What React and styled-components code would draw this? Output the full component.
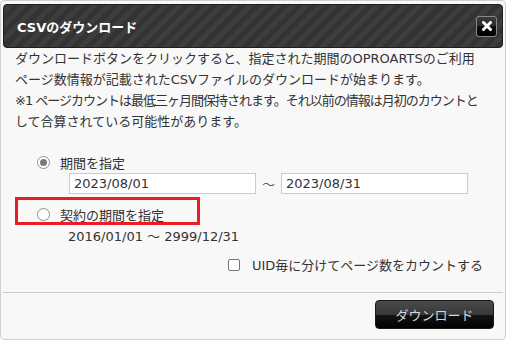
import React from 'react';
import styled, { createGlobalStyle } from 'styled-components';

const GlobalStyle = createGlobalStyle`
    body {
        margin: 0;
        background: #ffffff;
        font-family: "DejaVu Sans", "Noto Sans CJK JP", sans-serif;
    }
`;

const Dialog = styled.div`
    position: relative;
    box-sizing: border-box;
    width: 506px;
    height: 340px;
    border: 1px solid #cfcfcf;
    border-radius: 4px;
    padding: 3px 2px 0 2px;
    background: #f8f8f8;
    display: flex;
    flex-direction: column;
    color: #333333;
    font-size: 13px;
`;

const TitleBar = styled.div`
    box-sizing: border-box;
    height: 44px;
    border: 1px solid #1e1e1e;
    border-radius: 4px;
    background-color: #333333;
    background-image: repeating-linear-gradient(
        -45deg,
        #333333 0px,
        #333333 5px,
        #3d3d3d 5px,
        #3d3d3d 10px
    );
    display: flex;
    align-items: center;
    justify-content: space-between;
    padding: 0 5px 0 13px;
`;

const Title = styled.h1`
    margin: 0;
    font-size: 13px;
    font-weight: bold;
    color: #ffffff;
`;

const CloseButton = styled.button`
    box-sizing: border-box;
    width: 21px;
    height: 21px;
    padding: 0;
    border: 1px solid #8a8a8a;
    border-radius: 3px;
    background: linear-gradient(#3a3a3a 0%, #2a2a2a 50%, #0c0c0c 50%, #000000 100%);
    display: flex;
    align-items: center;
    justify-content: center;
`;

const Body = styled.div`
    flex: 1;
    display: flex;
    flex-direction: column;
    padding: 0 12px;
`;

const Description = styled.p`
    margin: 0;
    line-height: 21px;
    white-space: nowrap;
`;

const Tight = styled.span`
    letter-spacing: -1px;
`;

const Options = styled.div`
    display: flex;
    flex-direction: column;
    padding: 19px 0 0 22px;
`;

const RadioRow = styled.label`
    display: flex;
    align-items: center;
    gap: 10px;
    height: 22px;
`;

const Radio = styled.span`
    box-sizing: border-box;
    width: 13px;
    height: 13px;
    border-radius: 50%;
    border: 1px solid #8f8f8f;
    background: #ffffff;
    display: flex;
    align-items: center;
    justify-content: center;

    &::after {
        content: '';
        width: 7px;
        height: 7px;
        border-radius: 50%;
        background: ${p => (p.$checked ? '#7a7a7a' : 'transparent')};
    }
`;

const RangeRow = styled.div`
    display: flex;
    align-items: center;
    gap: 6px;
    padding: 0 0 0 32px;
    margin: 0 0 9px 0;
`;

const DateInput = styled.div`
    box-sizing: border-box;
    width: 187px;
    height: 21px;
    border: 1px solid #cccccc;
    background: #ffffff;
    padding: 0 4px;
    display: flex;
    align-items: center;
`;

const Tilde = styled.span`
    color: #555555;
`;

const Period = styled.div`
    padding: 2px 0 0 31px;
    line-height: 20px;
`;

const CheckRow = styled.label`
    display: flex;
    align-items: center;
    justify-content: flex-end;
    gap: 12px;
    padding: 8px 8px 0 0;
`;

const Checkbox = styled.span`
    box-sizing: border-box;
    width: 12px;
    height: 12px;
    border: 1px solid #777777;
    border-radius: 2px;
    background: #ffffff;
`;

const Footer = styled.div`
    box-sizing: border-box;
    height: 47px;
    border-top: 1px solid #cccccc;
    display: flex;
    justify-content: flex-end;
    padding: 7px 9px 0 0;
`;

const DownloadButton = styled.button`
    box-sizing: border-box;
    width: 119px;
    height: 29px;
    border: 1px solid #1a1a1a;
    border-radius: 4px;
    background: linear-gradient(#4a4a4a 0%, #383838 50%, #141414 52%, #000000 100%);
    color: #d6d6d6;
    font-family: "DejaVu Sans", "Noto Sans CJK JP", sans-serif;
    font-size: 13px;
`;

const Highlight = styled.div`
    position: absolute;
    left: 14px;
    top: 196px;
    width: 185px;
    height: 28px;
    box-sizing: border-box;
    border: 3px solid #e81d25;
`;

const App = () => {
    return (
        <>
            <GlobalStyle />
            <Dialog>
                <TitleBar>
                    <Title>CSVのダウンロード</Title>
                    <CloseButton>
                        <svg width="10" height="10" viewBox="0 0 10 10">
                            <path d="M1.5 1.5 L8.5 8.5 M8.5 1.5 L1.5 8.5" stroke="#ffffff" strokeWidth="2.8" strokeLinecap="square" />
                        </svg>
                    </CloseButton>
                </TitleBar>
                <Body>
                    <Description>
                        ダウンロードボタンをクリックすると、指定された期間のOPROARTSのご利用<br />
                        ページ数情報が記載されたCSVファイルのダウンロードが始まります。<br />
                        <Tight>※1 ページカウントは最低三ヶ月間保持されます。それ以前の情報は月初のカウントと</Tight><br />
                        して合算されている可能性があります。
                    </Description>
                    <Options>
                        <RadioRow>
                            <Radio $checked />
                            期間を指定
                        </RadioRow>
                        <RangeRow>
                            <DateInput>2023/08/01</DateInput>
                            <Tilde>～</Tilde>
                            <DateInput>2023/08/31</DateInput>
                        </RangeRow>
                        <RadioRow>
                            <Radio />
                            契約の期間を指定
                        </RadioRow>
                        <Period>2016/01/01 ～ 2999/12/31</Period>
                    </Options>
                    <CheckRow>
                        <Checkbox />
                        UID毎に分けてページ数をカウントする
                    </CheckRow>
                </Body>
                <Footer>
                    <DownloadButton>ダウンロード</DownloadButton>
                </Footer>
                <Highlight />
            </Dialog>
        </>
    );
};

export default App;
